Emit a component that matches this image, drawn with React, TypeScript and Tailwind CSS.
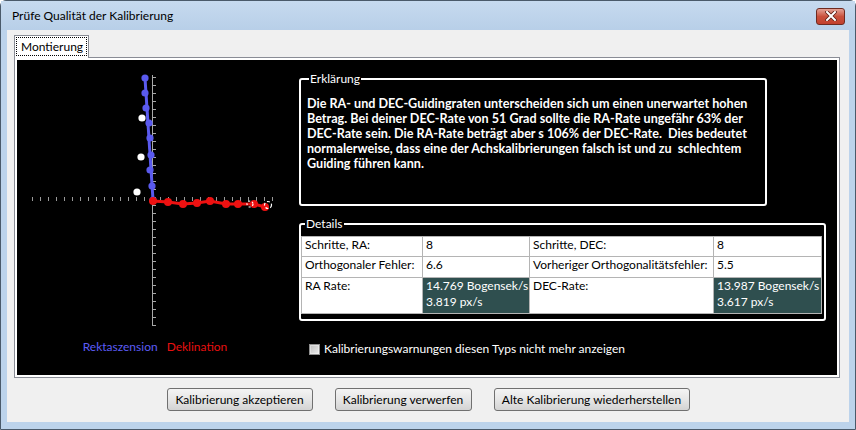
import React from 'react';

// Kalibrierungs-Prüfdialog (Win7 Basic Look)

const blue = [
  [146, 78], [146, 93], [147, 108], [150, 123], [151, 138], [152, 155], [151, 170], [153, 186], [154, 200],
];
const red = [
  [154, 201], [169, 202], [184, 204], [198, 203], [211, 201], [227, 204], [239, 204], [255, 204], [266, 207],
];
const white = [
  [143, 118], [142, 157], [138, 192],
];

const lines = [
  'Die RA- und DEC-Guidingraten unterscheiden sich um einen unerwartet hohen',
  'Betrag. Bei deiner DEC-Rate von 51 Grad sollte die RA-Rate ungefähr 63% der',
  'DEC-Rate sein. Die RA-Rate beträgt aber s 106% der DEC-Rate.  Dies bedeutet',
  'normalerweise, dass eine der Achskalibrierungen falsch ist und zu  schlechtem',
  'Guiding führen kann.',
];

function Chart() {
  const hTicks = [];
  for (let x = 33; x <= 273; x += 8) hTicks.push(x);
  const vTicks = [];
  for (let y = 77; y <= 325; y += 8) vTicks.push(y);

  return (
    <svg width="282" height="276" viewBox="18 60 282 276">
      {hTicks.map((x) => (
        <line key={'h' + x} x1={x + 0.5} y1={197} x2={x + 0.5} y2={201} stroke="#9a9a9a" strokeWidth="1" />
      ))}
      <line x1="153.5" y1="75" x2="153.5" y2="325" stroke="#a8a8a8" strokeWidth="1" />
      {vTicks.map((y) => (
        <line key={'v' + y} x1={153} y1={y + 0.5} x2={157} y2={y + 0.5} stroke="#a8a8a8" strokeWidth="1" />
      ))}
      <polyline points="146,78 154,200" fill="none" stroke="#5a5aee" strokeWidth="3" />
      {blue.map(([x, y], i) => (
        <circle key={'b' + i} cx={x} cy={y} r="3.6" fill="#5a5aee" />
      ))}
      <polyline points={red.map((p) => p.join(',')).join(' ')} fill="none" stroke="#ee1111" strokeWidth="3" />
      {red.map(([x, y], i) => (
        <circle key={'r' + i} cx={x} cy={y} r="4" fill="#ee1111" />
      ))}
      {white.map(([x, y], i) => (
        <circle key={'w' + i} cx={x} cy={y} r="3.6" fill="#ffffff" />
      ))}
      <circle cx="251" cy="204" r="3" fill="none" stroke="#ffffff" strokeWidth="1.2" strokeDasharray="2 2" />
      <circle cx="269" cy="205" r="3.5" fill="none" stroke="#ffffff" strokeWidth="1.2" strokeDasharray="3 2" />
    </svg>
  );
}

function Cell({ children, dark, w }: { children: React.ReactNode; dark?: boolean; w: string }) {
  return (
    <td
      className={`${w} border border-[#b4b4b4] px-[3px] align-top leading-[16px] whitespace-nowrap overflow-hidden ${
        dark ? 'bg-[#2f4f4f] text-white' : 'bg-white text-black'
      }`}
    >
      {children}
    </td>
  );
}

function Button({ label, w }: { label: string; w: string }) {
  return (
    <button
      className={`${w} h-[23px] rounded-[3px] border border-[#707070] bg-gradient-to-b from-[#f4f4f4] via-[#e6e6e6] to-[#d3d3d3] text-[12px] text-black`}
    >
      {label}
    </button>
  );
}

export default function App() {
  return (
    <div className="w-[856px] h-[430px] font-['Lato',sans-serif] text-[12px] text-black">
      <div className="w-[856px] h-[430px] flex flex-col rounded-t-[6px] border border-[#4a5a6a] bg-[#bcd3eb]">
        {/* Titelleiste */}
        <div className="h-[29px] flex items-center justify-between pl-[11px] pr-[10px] bg-gradient-to-b from-[#c6daef] to-[#b8cfe8]">
          <span className="text-[12px] text-black">Prüfe Qualität der Kalibrierung</span>
          <div className="w-[29px] h-[17px] mt-[1px] rounded-[3px] border border-[#6e2a20] bg-gradient-to-b from-[#e3a195] via-[#c9503c] to-[#c2402d] flex items-center justify-center">
            <svg width="12" height="10" viewBox="0 0 12 10">
              <path d="M2 1 L10 9 M10 1 L2 9" stroke="#5a1d14" strokeWidth="3.6" strokeLinecap="square" />
              <path d="M2 1 L10 9 M10 1 L2 9" stroke="#ffffff" strokeWidth="2" strokeLinecap="square" />
            </svg>
          </div>
        </div>

        {/* Client-Bereich */}
        <div className="mx-[6px] h-[392px] bg-[#f0f0f0] flex flex-col pl-[7px] pt-[5px]">
          <div className="flex">
            <div className="w-[75px] h-[23px] -mb-[1px] relative z-10 border border-b-0 border-[#898c95] bg-white px-[1px] pt-[1px]">
              <div className="h-[19px] border border-dotted border-black flex items-center pl-[4px] text-[12px]">
                Montierung
              </div>
            </div>
          </div>

          <div className="w-[826px] h-[321px] border border-[#898c95] bg-white p-[2px]">
            <div className="w-full h-full bg-black flex">
              {/* Diagramm */}
              <div className="w-[282px] flex flex-col">
                <Chart />
                <div className="mt-[3px] pr-[6px] flex justify-center gap-[9px] text-[12px] leading-[16px]">
                  <span className="text-[#5c5cf5]">Rektaszension</span>
                  <span className="text-[#e81010]">Deklination</span>
                </div>
              </div>

              {/* Rechte Spalte */}
              <div className="flex flex-col pt-[11px]">
                <fieldset className="w-[468px] h-[135px] border-2 border-white rounded-[3px] px-[4px]">
                  <legend className="ml-[4px] px-[1px] text-white text-[12px] leading-[16px]">Erklärung</legend>
                  <div className="pt-[9px] pl-[2px] text-white font-bold text-[12.6px] leading-[15px]">
                    {lines.map((l) => (
                      <div key={l} className="whitespace-pre">{l}</div>
                    ))}
                  </div>
                </fieldset>

                <fieldset className="mt-[10px] w-[527px] h-[105px] border-2 border-white rounded-[3px] pl-0 pr-[1px] pt-[4px]">
                  <legend className="ml-[4px] px-[1px] text-white text-[12px] leading-[16px]">Details</legend>
                  <table className="w-[520px] border-collapse table-fixed text-[12px]">
                    <tbody>
                      <tr className="h-[20px]">
                        <Cell w="w-[121px]">Schritte, RA:</Cell>
                        <Cell w="w-[107px]">8</Cell>
                        <Cell w="w-[184px]">Schritte, DEC:</Cell>
                        <Cell w="w-[108px]">8</Cell>
                      </tr>
                      <tr className="h-[21px]">
                        <Cell w="w-[121px]">Orthogonaler Fehler:</Cell>
                        <Cell w="w-[107px]">6.6</Cell>
                        <Cell w="w-[184px]">Vorheriger Orthogonalitätsfehler:</Cell>
                        <Cell w="w-[108px]">5.5</Cell>
                      </tr>
                      <tr className="h-[36px]">
                        <Cell w="w-[121px]">RA Rate:</Cell>
                        <Cell w="w-[107px]" dark>
                          14.769 Bogensek/s<br />3.819 px/s
                        </Cell>
                        <Cell w="w-[184px]">DEC-Rate:</Cell>
                        <Cell w="w-[108px]" dark>
                          13.987 Bogensek/s<br />3.617 px/s
                        </Cell>
                      </tr>
                    </tbody>
                  </table>
                </fieldset>

                <label className="mt-[19px] ml-[10px] flex items-center gap-[4px] text-white text-[12px]">
                  <span className="w-[11px] h-[11px] border border-[#8f8f8f] bg-gradient-to-br from-[#d8d8d8] to-[#f4f4f4] flex items-center justify-center">
                    <span className="w-[7px] h-[7px] bg-gradient-to-br from-[#c4c4c4] to-[#e8e8e8]" />
                  </span>
                  Kalibrierungswarnungen diesen Typs nicht mehr anzeigen
                </label>
              </div>
            </div>
          </div>

          {/* Schaltflächen */}
          <div className="mt-[10px] pr-[7px] flex justify-center gap-[22px]">
            <Button label="Kalibrierung akzeptieren" w="w-[146px]" />
            <Button label="Kalibrierung verwerfen" w="w-[137px]" />
            <Button label="Alte Kalibrierung wiederherstellen" w="w-[196px]" />
          </div>
        </div>
      </div>
    </div>
  );
}
